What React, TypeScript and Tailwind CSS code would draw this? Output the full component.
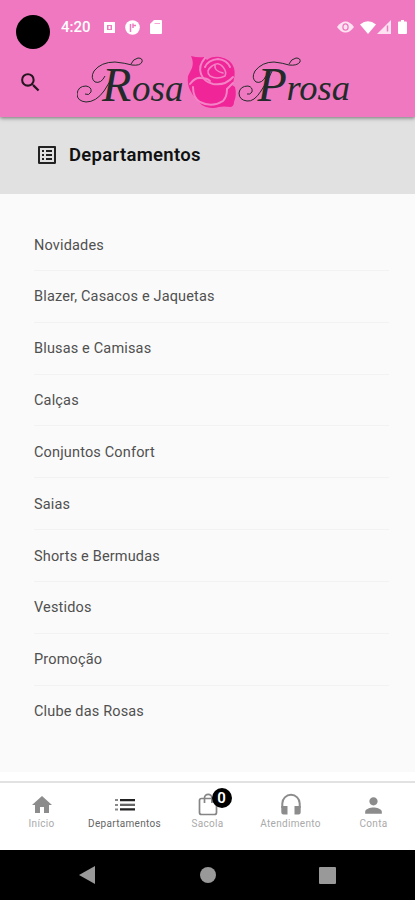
import { MdHome, MdListAlt, MdPerson, MdSearch } from 'react-icons/md';

const departments = [
  'Novidades',
  'Blazer, Casacos e Jaquetas',
  'Blusas e Camisas',
  'Calças',
  'Conjuntos Confort',
  'Saias',
  'Shorts e Bermudas',
  'Vestidos',
  'Promoção',
  'Clube das Rosas',
];

function BagIcon() {
  return (
    <svg width="24" height="24" viewBox="0 0 24 24" fill="none" stroke="#858585" strokeWidth="1.7">
      <rect x="3.500" y="5.500" width="17" height="16" rx="2" />
      <path d="M8.500 10V5a3.700 3.700 0 0 1 7.400 0v5" />
    </svg>
  );
}

function ListIcon() {
  return (
    <svg width="20" height="24" viewBox="0 0 20 24">
      <path fill="#888" d="M0 6h3v2H0zM0 11h3v2H0zM0 15.500h3v2H0z" />
      <path fill="#222" d="M5 6h15v2.200H5zM5 15.300h15v2.200H5z" />
      <path fill="#666" d="M5 10.700h15v2.300H5z" />
    </svg>
  );
}

function HeadsetIcon() {
  return (
    <svg width="22" height="24" viewBox="0 0 22 24">
      <path d="M2.300 15v-4.500a8.700 8.700 0 0 1 17.400 0V15" fill="none" stroke="#8c8c8c" strokeWidth="2" />
      <path fill="#8c8c8c" d="M1.300 13H7.500v8.500h-4q-2.200 0-2.200-2.200zM14.500 13h6.200v6.300q0 2.200-2.200 2.200h-4z" />
    </svg>
  );
}

const tabs = [
  { label: 'Início', icon: <MdHome size={24} className="text-[#8c8c8c]" /> },
  { label: 'Departamentos', icon: <ListIcon />, active: true },
  { label: 'Sacola', icon: <BagIcon />, badge: '0' },
  { label: 'Atendimento', icon: <HeadsetIcon /> },
  { label: 'Conta', icon: <MdPerson size={25} className="text-[#8c8c8c]" /> },
];

function StatusBar() {
  return (
    <div className="flex h-[54px] items-center pl-4">
      <div className="mt-[10px] h-[34px] w-[34px] rounded-full bg-black" />
      <span className="ml-[11px] w-[30px] text-[15px] leading-none font-medium text-white">4:20</span>
      <svg className="ml-[13px]" width="11" height="11" viewBox="0 0 11 11">
        <path fill="#fff" fillRule="evenodd" d="M0 0h11v11H0zM3 3v5h5V3z" />
        <path fill="#fff" d="M4.500 4h2v3h-2z" />
      </svg>
      <svg className="ml-[10px]" width="15" height="15" viewBox="0 0 15 15">
        <circle cx="7.500" cy="7.500" r="7.300" fill="#fff" />
        <path d="M5.500 12V4M8 3.500v4.500M8 5.500h3" fill="none" stroke="#f078c0" strokeWidth="1.500" />
      </svg>
      <svg className="ml-[10px]" width="12" height="14" viewBox="0 0 12 14">
        <path fill="#fff" d="M4 0h7q1 0 1 1v12q0 1-1 1H1q-1 0-1-1V4z" />
        <path stroke="#f4a3d3" d="M4.500 3.500h5.500" />
      </svg>
      <div className="mr-[8px] ml-auto flex items-center">
        <svg width="17" height="12" viewBox="0 0 17 12">
          <path fill="#fde3f2" d="M0 6Q4 .5 8.500 .5T17 6Q13 11.500 8.500 11.500T0 6" />
          <ellipse cx="8.500" cy="6" rx="2.600" ry="3.200" fill="none" stroke="#f078c0" strokeWidth="1.300" />
        </svg>
        <svg className="ml-[6px]" width="16" height="13" viewBox="0 0 16 13">
          <path fill="#fff" d="M0 3.500Q8-3 16 3.500L8 13z" />
        </svg>
        <svg className="ml-[1px]" width="14" height="14" viewBox="0 0 14 14">
          <path fill="#fde3f2" d="M14 0v14H0z" />
          <path stroke="#f078c0" strokeWidth="1.500" d="M10.500 5.500v6" />
        </svg>
        <svg className="ml-[7px]" width="9" height="14" viewBox="0 0 9 14">
          <path fill="#fff" d="M3 0h3v1.500h2q1 0 1 1V13q0 1-1 1H1q-1 0-1-1V2.500q0-1 1-1h2z" />
        </svg>
      </div>
    </div>
  );
}

function Rose() {
  return (
    <svg className="-mx-px shrink-0" width="52" height="56" viewBox="0 0 52 56">
      <path
        fill="#ef2598"
        d="M4 2q7 2 13 1l3 3q5-4 13-3 11 2 14 11 2 8-2 17l3 2q2 8-1 15 0 4-3 5-8-1-12 0-6 2-13 0-7-3-9-8-5-4-7-9Q0 30 1 22l4-8Q7 8 4 2z"
      />
      <g fill="none" stroke="#f383c6" strokeWidth="2" strokeLinecap="round">
        <path d="M18 4q-7 8-4 16 3 8 12 10 12 2 20-7" />
        <path d="M3 30q5-7 11-6 6 0 9 3" />
        <path d="M6 33q0 11 7 15 12 6 23-1 4-4 4-12 3-3 6-6" />
        <path d="M18 13q3-7 13-8 9 1 12 8" />
        <path d="M25 12q6-5 11 1 4 5 2 9-8 4-15 0-5-5 2-10zM28 11q-1 6 8 8" strokeWidth="1.600" />
      </g>
    </svg>
  );
}

function Logo() {
  return (
    <div className="flex h-[58px] w-[276px] font-['Liberation_Serif',serif] text-[#222b2a] italic">
      <div className="relative w-[111px]">
        <svg className="absolute inset-0" width="111" height="58" viewBox="0 0 111 58" fill="none" stroke="currentColor">
          <path d="M39 15q-5 12-12 22-8 11-18 11-9-1-9-8 1-8 9-8 6 1 5 6-2 4-6 2" />
          <path d="M28 22q-4 8-10 6-5-4-1-11Q24 8 38 8q10 1 17 3 8 1 10-3 1-4-4-4-5 1-7 6" />
        </svg>
        <span className="absolute top-[7px] left-[25px] text-[48px] leading-none">R</span>
        <span className="absolute top-[16px] left-[55px] text-[37px] leading-none">osa</span>
      </div>
      <Rose />
      <div className="relative w-[116px]">
        <svg className="absolute inset-0" width="116" height="58" viewBox="0 0 116 58" fill="none" stroke="currentColor">
          <path d="M35 15q-5 12-12 22-7 11-14 10-8-1-8-8 1-7 9-7 5 1 4 6-2 3-5 2" />
          <path d="M28 22q-4 8-10 6-5-4-1-11Q24 8 36 8q9 1 15 3 8 1 11-3 1-4-4-4-5 1-7 6" />
        </svg>
        <span className="absolute top-[7px] left-[20px] text-[48px] leading-none">P</span>
        <span className="absolute top-[16px] left-[49px] text-[36.500px] leading-none">rosa</span>
      </div>
    </div>
  );
}

export default function App() {
  return (
    <div className="flex h-[900px] w-[415px] flex-col overflow-hidden bg-white font-['Roboto',sans-serif]">
      <header className="relative z-10 h-[117px] shrink-0 bg-[#f078c0] shadow-[0_1px_4px_rgba(0,0,0,0.5)]">
        <StatusBar />
        <div className="flex items-start">
          <MdSearch size={25} className="mt-[16px] ml-[18px] shrink-0 text-[#251520]" />
          <div className="ml-[34px]">
            <Logo />
          </div>
        </div>
      </header>

      <div className="flex h-[77px] shrink-0 items-center bg-[#e1e1e1] pl-[35px]">
        <MdListAlt size={24} className="-mt-[2px] text-[#222]" />
        <h1 className="ml-[10px] text-[18.500px] leading-none font-semibold tracking-[0.300px] text-[#111]">
          Departamentos
        </h1>
      </div>

      <main className="h-[578px] shrink-0 bg-[#fafafa] pt-[25px] pr-[26px] pl-[34px]">
        {departments.map((name) => (
          <div
            key={name}
            className="flex h-[51.850px] items-center border-b border-[#f2f2f2] pt-[2px] text-[14.500px] tracking-[0.160px] text-[#505050] last:border-0 last:pt-0"
          >
            {name}
          </div>
        ))}
      </main>

      <nav className="mt-[9px] grid h-[69px] shrink-0 grid-cols-5 border-t-2 border-[#e2e2e2] bg-white">
        {tabs.map((tab) => (
          <div key={tab.label} className="flex flex-col items-center pt-[9px]">
            <div className="relative flex h-[26px] items-center">
              {tab.icon}
              {tab.badge && (
                <span className="absolute -top-[4px] left-[16px] flex h-5 w-5 items-center justify-center rounded-full bg-black text-[15px] font-semibold text-white">
                  {tab.badge}
                </span>
              )}
            </div>
            <span
              className={
                tab.active
                  ? 'text-[10px] leading-[11px] tracking-[0.300px] text-[#666]'
                  : 'text-[10px] leading-[11px] tracking-[0.300px] text-[#aaa]'
              }
            >
              {tab.label}
            </span>
          </div>
        ))}
      </nav>

      <div className="flex h-[50px] shrink-0 items-center bg-black pl-[79px]">
        <svg width="17" height="18" viewBox="0 0 17 18">
          <path fill="#999" d="M16 0v18L0 9z" />
        </svg>
        <div className="ml-[104px] h-4 w-4 rounded-full bg-[#999]" />
        <div className="ml-[103px] h-[17px] w-[17px] rounded-[1px] bg-[#999]" />
      </div>
    </div>
  );
}
